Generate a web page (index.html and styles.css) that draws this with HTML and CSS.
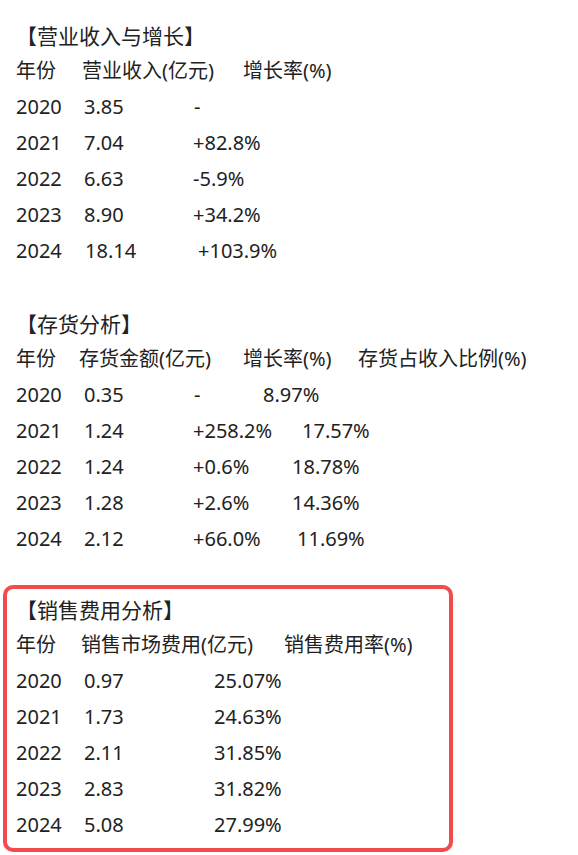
FILE: index.html
```html
<!DOCTYPE html>
<html lang="zh-CN">
<head>
    <meta charset="UTF-8">
    <meta name="viewport" content="width=device-width, initial-scale=1.0">
    <title>财务数据</title>
    <link rel="stylesheet" href="styles.css">
</head>
<body>
    <!-- 营业收入 -->
    <div class="section">
        <div class="title">【营业收入与增长】</div>
        <div class="row"><span class="w66">年份</span><span class="w161">营业收入(亿元)</span><span>增长率(%)</span></div>
        <div class="row"><span class="w68">2020</span><span class="w110">3.85</span><span>-</span></div>
        <div class="row"><span class="w68">2021</span><span class="w109">7.04</span><span>+82.8%</span></div>
        <div class="row"><span class="w68">2022</span><span class="w109">6.63</span><span>-5.9%</span></div>
        <div class="row"><span class="w68">2023</span><span class="w109">8.90</span><span>+34.2%</span></div>
        <div class="row"><span class="w69">2024</span><span class="w113">18.14</span><span>+103.9%</span></div>
    </div>

    <!-- 存货 -->
    <div class="section gap">
        <div class="title">【存货分析】</div>
        <div class="row"><span class="w63">年份</span><span class="w164">存货金额(亿元)</span><span class="w115">增长率(%)</span><span>存货占收入比例(%)</span></div>
        <div class="row"><span class="w68">2020</span><span class="w110">0.35</span><span class="w69">-</span><span>8.97%</span></div>
        <div class="row"><span class="w68">2021</span><span class="w109">1.24</span><span class="w109">+258.2%</span><span>17.57%</span></div>
        <div class="row"><span class="w68">2022</span><span class="w109">1.24</span><span class="w99">+0.6%</span><span>18.78%</span></div>
        <div class="row"><span class="w68">2023</span><span class="w109">1.28</span><span class="w99">+2.6%</span><span>14.36%</span></div>
        <div class="row"><span class="w68">2024</span><span class="w109">2.12</span><span class="w104">+66.0%</span><span>11.69%</span></div>
    </div>

    <!-- 销售费用 (highlighted) -->
    <div class="section boxed">
        <div class="title">【销售费用分析】</div>
        <div class="row"><span class="w65">年份</span><span class="w203">销售市场费用(亿元)</span><span>销售费用率(%)</span></div>
        <div class="row"><span class="w68">2020</span><span class="w130">0.97</span><span>25.07%</span></div>
        <div class="row"><span class="w68">2021</span><span class="w130">1.73</span><span>24.63%</span></div>
        <div class="row"><span class="w68">2022</span><span class="w130">2.11</span><span>31.85%</span></div>
        <div class="row"><span class="w68">2023</span><span class="w130">2.83</span><span>31.82%</span></div>
        <div class="row"><span class="w68">2024</span><span class="w130">5.08</span><span>27.99%</span></div>
    </div>
</body>
</html>
```

FILE: styles.css
```css
body {
    margin: 0;
    padding: 17px 0 0 0;
    background: white;
    color: #222;
    font-family: "Noto Sans", "Noto Sans CJK SC", sans-serif;
    font-size: 20px;
}

.section {
    padding-left: 16px;
}

.section.gap {
    margin-top: 36px;
}

.title,
.row {
    height: 36px;
    line-height: 36px;
    white-space: nowrap;
}

.title {
    font-family: "Noto Sans CJK SC", sans-serif;
    font-size: 21px;
}

.row {
    display: flex;
}

.row span {
    display: inline-block;
}

.boxed {
    margin: 28px 0 0 3px;
    width: 420px;
    padding: 2px 13px 5px 9px;
    border: 4px solid #f24b4b;
    border-radius: 10px;
}

.w63 { width: 63px; }
.w65 { width: 65px; }
.w66 { width: 66px; }
.w68 { width: 68px; }
.w69 { width: 69px; }
.w99 { width: 99px; }
.w104 { width: 104px; }
.w109 { width: 109px; }
.w110 { width: 110px; }
.w113 { width: 113px; }
.w115 { width: 115px; }
.w130 { width: 130px; }
.w161 { width: 161px; }
.w164 { width: 164px; }
.w203 { width: 203px; }
```
